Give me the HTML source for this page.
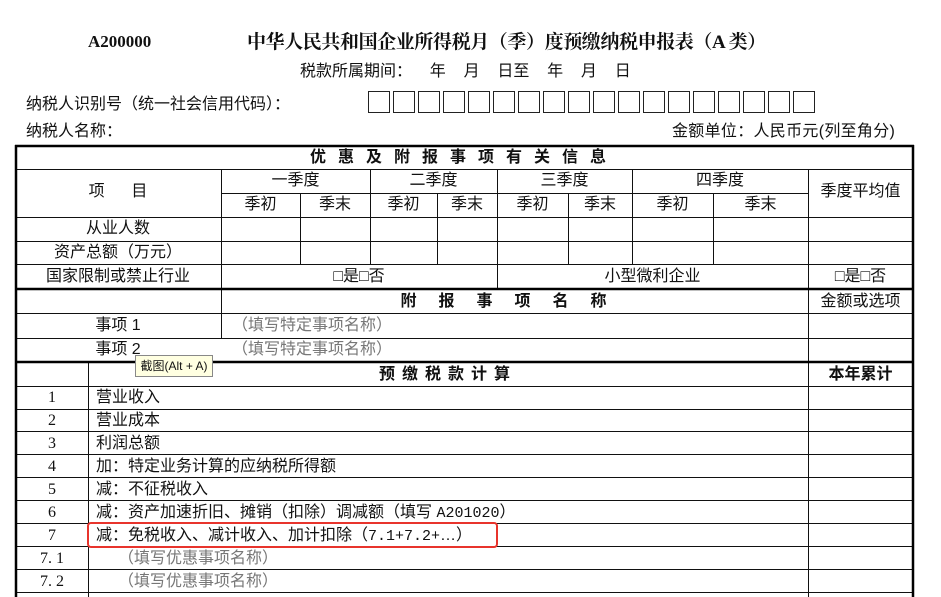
<!DOCTYPE html>
<html><head><meta charset="utf-8"><style>
body{margin:0;width:941px;height:597px;background:#fff;position:relative;overflow:hidden;font-family:"Liberation Serif","Noto Serif CJK SC","Noto Sans CJK SC",serif;color:#111}
.t{position:absolute;white-space:nowrap;font-size:16px;line-height:18px}
.c{text-align:center}
.s{font-family:"Liberation Sans","Noto Sans CJK SC",sans-serif}
.g{color:#777}
.b{font-weight:bold}
svg{position:absolute;left:0;top:0}
</style></head><body>
<svg width="941" height="597">
<g stroke="#111" stroke-width="1" fill="none">
<g stroke="#222">
<rect x="368.5" y="91.5" width="21" height="21"/><rect x="393.5" y="91.5" width="21" height="21"/><rect x="418.5" y="91.5" width="21" height="21"/><rect x="443.5" y="91.5" width="21" height="21"/><rect x="468.5" y="91.5" width="21" height="21"/><rect x="493.5" y="91.5" width="21" height="21"/><rect x="518.5" y="91.5" width="21" height="21"/><rect x="543.5" y="91.5" width="21" height="21"/><rect x="568.5" y="91.5" width="21" height="21"/><rect x="593.5" y="91.5" width="21" height="21"/><rect x="618.5" y="91.5" width="21" height="21"/><rect x="643.5" y="91.5" width="21" height="21"/><rect x="668.5" y="91.5" width="21" height="21"/><rect x="693.5" y="91.5" width="21" height="21"/><rect x="718.5" y="91.5" width="21" height="21"/><rect x="743.5" y="91.5" width="21" height="21"/><rect x="768.5" y="91.5" width="21" height="21"/><rect x="793.5" y="91.5" width="21" height="21"/>
</g>
<line x1="15" y1="169.5" x2="913" y2="169.5"/>
<line x1="221" y1="193.5" x2="808" y2="193.5"/>
<line x1="15" y1="217.5" x2="913" y2="217.5"/>
<line x1="15" y1="241.5" x2="913" y2="241.5"/>
<line x1="15" y1="264.5" x2="913" y2="264.5"/>
<line x1="15" y1="313.5" x2="913" y2="313.5"/>
<line x1="15" y1="338.5" x2="913" y2="338.5"/>
<line x1="15" y1="386.5" x2="913" y2="386.5"/>
<line x1="15" y1="409.5" x2="913" y2="409.5"/>
<line x1="15" y1="431.5" x2="913" y2="431.5"/>
<line x1="15" y1="454.5" x2="913" y2="454.5"/>
<line x1="15" y1="477.5" x2="913" y2="477.5"/>
<line x1="15" y1="500.5" x2="913" y2="500.5"/>
<line x1="15" y1="523.5" x2="913" y2="523.5"/>
<line x1="15" y1="546.5" x2="913" y2="546.5"/>
<line x1="15" y1="569.5" x2="913" y2="569.5"/>
<line x1="15" y1="592.5" x2="913" y2="592.5"/>
<line x1="221.5" y1="169" x2="221.5" y2="338"/>
<line x1="300.5" y1="193" x2="300.5" y2="264"/>
<line x1="370.5" y1="169" x2="370.5" y2="264"/>
<line x1="437.5" y1="193" x2="437.5" y2="264"/>
<line x1="497.5" y1="169" x2="497.5" y2="288"/>
<line x1="568.5" y1="193" x2="568.5" y2="264"/>
<line x1="632.5" y1="169" x2="632.5" y2="264"/>
<line x1="713.5" y1="193" x2="713.5" y2="264"/>
<line x1="808.5" y1="169" x2="808.5" y2="597"/>
<line x1="88.5" y1="362" x2="88.5" y2="597"/>
</g>
<g stroke="#000" stroke-width="2.5">
<line x1="15" y1="146" x2="914" y2="146"/>
<line x1="15" y1="289" x2="914" y2="289"/>
<line x1="15" y1="362" x2="914" y2="362"/>
<line x1="16" y1="145" x2="16" y2="597"/>
<line x1="913" y1="145" x2="913" y2="597"/>
</g>
<rect x="88" y="523" width="409" height="24" rx="3" fill="none" stroke="#e8342c" stroke-width="2"/>
</svg>

<div class="t b" style="left:88px;top:33px;font-size:17px">A200000</div>
<div class="t b" style="left:247px;top:31px;font-size:19px;line-height:24px;letter-spacing:-0.4px">中华人民共和国企业所得税月（季）度预缴纳税申报表（A 类）</div>
<div class="t s" style="left:300px;top:63px">税款所属期间：&nbsp;&nbsp;&nbsp;&nbsp;年&nbsp;&nbsp;&nbsp;&nbsp;月&nbsp;&nbsp;&nbsp;&nbsp;日至&nbsp;&nbsp;&nbsp;&nbsp;年&nbsp;&nbsp;&nbsp;&nbsp;月&nbsp;&nbsp;&nbsp;&nbsp;日</div>
<div class="t s" style="left:26px;top:96px">纳税人识别号（统一社会信用代码）：</div>
<div class="t s" style="left:26px;top:123px">纳税人名称：</div>
<div class="t s" style="left:672px;top:123px;letter-spacing:0.3px">金额单位：人民币元(列至角分)</div>

<div class="t s b c" style="left:15px;width:898px;top:149px;letter-spacing:12px">优惠及附报事项有关信息</div>
<div class="t s c" style="left:15px;width:206px;top:183px">项&nbsp;&nbsp;&nbsp;&nbsp;&nbsp;&nbsp;目</div>
<div class="t s c" style="left:221px;width:149px;top:172px">一季度</div>
<div class="t s c" style="left:370px;width:127px;top:172px">二季度</div>
<div class="t s c" style="left:497px;width:135px;top:172px">三季度</div>
<div class="t s c" style="left:632px;width:176px;top:172px">四季度</div>
<div class="t s c" style="left:808px;width:105px;top:183px">季度平均值</div>
<div class="t s c" style="left:221px;width:79px;top:196px">季初</div>
<div class="t s c" style="left:300px;width:70px;top:196px">季末</div>
<div class="t s c" style="left:370px;width:67px;top:196px">季初</div>
<div class="t s c" style="left:437px;width:60px;top:196px">季末</div>
<div class="t s c" style="left:497px;width:71px;top:196px">季初</div>
<div class="t s c" style="left:568px;width:64px;top:196px">季末</div>
<div class="t s c" style="left:632px;width:81px;top:196px">季初</div>
<div class="t s c" style="left:713px;width:95px;top:196px">季末</div>
<div class="t s c" style="left:15px;width:206px;top:220px">从业人数</div>
<div class="t s c" style="left:15px;width:206px;top:244px">资产总额（万元）</div>
<div class="t s c" style="left:15px;width:206px;top:268px">国家限制或禁止行业</div>
<div class="t s c" style="left:221px;width:276px;top:268px">□是□否</div>
<div class="t s c" style="left:497px;width:311px;top:268px">小型微利企业</div>
<div class="t s c" style="left:808px;width:105px;top:268px">□是□否</div>
<div class="t s b c" style="left:221px;width:587px;top:293px;letter-spacing:22px">附报事项名称</div>
<div class="t s c" style="left:808px;width:105px;top:293px">金额或选项</div>
<div class="t s c" style="left:15px;width:206px;top:317px">事项 1</div>
<div class="t s g" style="left:232px;top:317px">（填写特定事项名称）</div>
<div class="t s c" style="left:15px;width:206px;top:341px">事项 2</div>
<div class="t s g" style="left:232px;top:341px">（填写特定事项名称）</div>
<div class="t s b c" style="left:88px;width:720px;top:366px;letter-spacing:7px">预缴税款计算</div>
<div class="t s b c" style="left:808px;width:105px;top:366px">本年累计</div>

<div class="t c" style="left:16px;width:72px;top:389px">1</div><div class="t s" style="left:96px;top:389px">营业收入</div>
<div class="t c" style="left:16px;width:72px;top:412px">2</div><div class="t s" style="left:96px;top:412px">营业成本</div>
<div class="t c" style="left:16px;width:72px;top:435px">3</div><div class="t s" style="left:96px;top:435px">利润总额</div>
<div class="t c" style="left:16px;width:72px;top:458px">4</div><div class="t s" style="left:96px;top:458px">加：特定业务计算的应纳税所得额</div>
<div class="t c" style="left:16px;width:72px;top:481px">5</div><div class="t s" style="left:96px;top:481px">减：不征税收入</div>
<div class="t c" style="left:16px;width:72px;top:504px">6</div><div class="t s" style="left:96px;top:504px">减：资产加速折旧、摊销（扣除）调减额（填写 <span style="font-family:'Liberation Mono',monospace;font-size:15px">A201020</span>）</div>
<div class="t c" style="left:16px;width:72px;top:527px">7</div><div class="t s" style="left:96px;top:527px">减：免税收入、减计收入、加计扣除（<span style="font-family:'Liberation Mono',monospace;font-size:15px">7.1+7.2+</span>…）</div>
<div class="t c" style="left:16px;width:72px;top:550px">7. 1</div><div class="t s g" style="left:118px;top:550px">（填写优惠事项名称）</div>
<div class="t c" style="left:16px;width:72px;top:573px">7. 2</div><div class="t s g" style="left:118px;top:573px">（填写优惠事项名称）</div>

<div class="t s" style="left:135px;top:355px;width:76px;height:20px;background:#ffffe1;border:1px solid #888;font-size:12px;line-height:20px;text-align:center">截图(Alt + A)</div>
</body></html>
